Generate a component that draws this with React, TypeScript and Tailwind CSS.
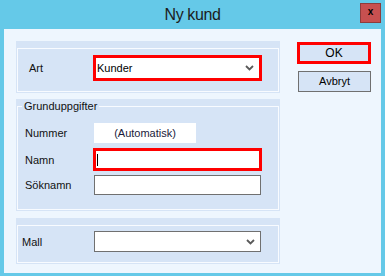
const font = { fontFamily: '"Liberation Sans", Arial, sans-serif' };

function Chevron() {
  return (
    <svg width="9" height="6" viewBox="0 0 9 6" className="shrink-0">
      <path d="M1 1 L4.5 4.5 L8 1" fill="none" stroke="#5a5a5a" strokeWidth="1.8" />
    </svg>
  );
}

function Label({ text, w }: { text: string; w: string }) {
  return <span className={`${w} shrink-0 text-[11px] leading-[14px] text-[#111]`}>{text}</span>;
}

export default function App() {
  return (
    <div
      className="flex h-[276px] w-[385px] flex-col bg-[#65c9e8]"
      style={font}
    >
      {/* Title bar */}
      <div className="relative flex h-[29px] items-center justify-center">
        <span className="text-[16px] tracking-[-0.4px] text-[#1c1c1c]">Ny kund</span>
        <button className="absolute right-[4px] top-[3px] flex h-[20px] w-[21px] items-center justify-center border border-[#8e3c3c] bg-[#c75050] pb-[2px] text-[10px] font-bold leading-none text-black">
          x
        </button>
      </div>

      {/* Client */}
      <div className="mx-[4px] flex h-[244px] bg-[#eef6fe] pl-[12px] pt-[12px]">
        <div className="flex w-[264px] flex-col">
          {/* Art */}
          <div className="h-[52px] bg-[#d6e4f6] px-[1px] pb-[1px] pt-[7px]">
            <div className="flex h-full border border-[#f8fbff] pl-[11px] pt-[6px]">
              <div className="flex h-[26px] items-center">
                <Label text="Art" w="w-[64px]" />
              </div>
              <div className="flex h-[26px] w-[169px] items-center justify-between border-[3px] border-[#ff0000] bg-white pl-[1px] pr-[5px]">
                <span className="text-[11px] text-black">Kunder</span>
                <Chevron />
              </div>
            </div>
          </div>

          {/* Grunduppgifter */}
          <div className="mt-[6px] h-[112px] bg-[#d6e4f6] px-[1px] pb-[1px]">
            <fieldset className="h-full border border-[#f8fbff] pl-[4px]">
              <legend className="px-[2px] text-[11px] leading-[14px] text-[#111]">Grunduppgifter</legend>
              <div className="flex flex-col pl-[3px] pt-[10px]">
                <div className="flex h-[20px] items-center">
                  <Label text="Nummer" w="w-[69px]" />
                  <div className="flex h-[20px] w-[102px] items-center justify-center bg-white text-[11px] text-[#1a1a3a]">
                    (Automatisk)
                  </div>
                </div>
                <div className="mt-[5px] flex h-[23px] items-center">
                  <Label text="Namn" w="w-[68px]" />
                  <div className="flex h-[23px] w-[169px] items-center border-[3px] border-[#ff0000] bg-white pl-[1px]">
                    <div className="h-[12px] w-px bg-black" />
                  </div>
                </div>
                <div className="mt-[4px] flex h-[20px] items-center">
                  <Label text="Söknamn" w="w-[69px]" />
                  <div className="h-[20px] w-[167px] border border-[#707070] bg-white" />
                </div>
              </div>
            </fieldset>
          </div>

          {/* Mall */}
          <div className="mt-[7px] h-[46px] bg-[#d6e4f6] px-[1px] pb-[1px] pt-[7px]">
            <div className="flex h-full border border-[#f8fbff] pl-[4px] pt-[5px]">
              <div className="flex h-[21px] items-center">
                <Label text="Mall" w="w-[72px]" />
              </div>
              <div className="flex h-[21px] w-[167px] items-center justify-end border border-[#707070] bg-white pr-[5px]">
                <Chevron />
              </div>
            </div>
          </div>
        </div>

        {/* Buttons */}
        <div className="ml-[17px] mt-[1px] flex flex-col">
          <button className="flex h-[22px] w-[74px] items-center justify-center border-[3px] border-[#ff0000] bg-[#d6e4f6] text-[12px] text-black">
            OK
          </button>
          <button className="ml-[1px] mt-[7px] flex h-[21px] w-[73px] items-center justify-center border border-[#707070] bg-[#d6e4f6] text-[11px] text-black">
            Avbryt
          </button>
        </div>
      </div>
    </div>
  );
}
